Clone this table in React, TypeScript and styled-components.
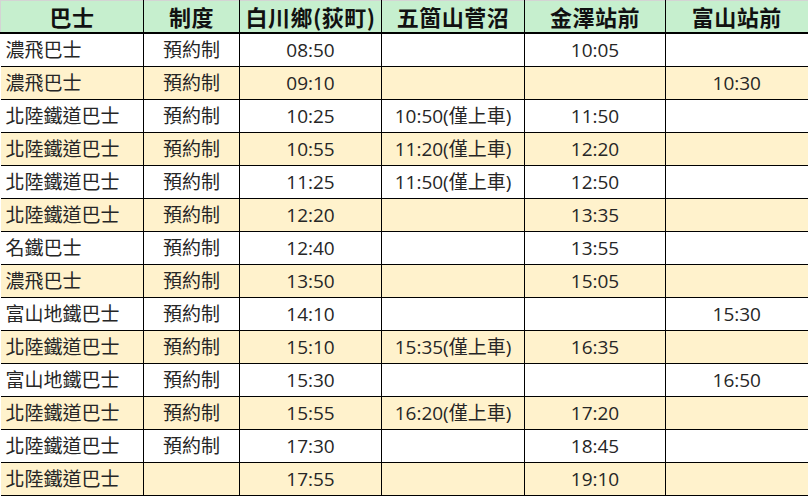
import styled, { createGlobalStyle } from "styled-components";

const GlobalStyle = createGlobalStyle`
  html, body {
    margin: 0;
    padding: 0;
    background: #ffffff;
  }
  body {
    font-family: "Open Sans", "Noto Sans CJK TC", sans-serif;
  }
`;

type Row = [string, string, string, string, string, string];

const rows: Row[] = [
  ["濃飛巴士", "預約制", "08:50", "", "10:05", ""],
  ["濃飛巴士", "預約制", "09:10", "", "", "10:30"],
  ["北陸鐵道巴士", "預約制", "10:25", "10:50(僅上車)", "11:50", ""],
  ["北陸鐵道巴士", "預約制", "10:55", "11:20(僅上車)", "12:20", ""],
  ["北陸鐵道巴士", "預約制", "11:25", "11:50(僅上車)", "12:50", ""],
  ["北陸鐵道巴士", "預約制", "12:20", "", "13:35", ""],
  ["名鐵巴士", "預約制", "12:40", "", "13:55", ""],
  ["濃飛巴士", "預約制", "13:50", "", "15:05", ""],
  ["富山地鐵巴士", "預約制", "14:10", "", "", "15:30"],
  ["北陸鐵道巴士", "預約制", "15:10", "15:35(僅上車)", "16:35", ""],
  ["富山地鐵巴士", "預約制", "15:30", "", "", "16:50"],
  ["北陸鐵道巴士", "預約制", "15:55", "16:20(僅上車)", "17:20", ""],
  ["北陸鐵道巴士", "預約制", "17:30", "", "18:45", ""],
  ["北陸鐵道巴士", "", "17:55", "", "19:10", ""],
];

const headers = ["巴士", "制度", "白川鄉(荻町)", "五箇山菅沼", "金澤站前", "富山站前"];
const widths = [143, 96, 142, 143, 141, 143];

const Table = styled.table`
  border-collapse: collapse;
  table-layout: fixed;
  width: 808px;
  font-family: "Open Sans", "Noto Sans CJK TC", sans-serif;
  color: #262626;
`;

const HeadCell = styled.th`
  height: 31px;
  padding: 0;
  background: #c6efce;
  border-top: 1px solid #d4d4d4;
  border-left: 1px solid #000;
  border-right: 2px solid #000;
  border-bottom: 2px solid #000;
  font-family: "Noto Sans CJK TC", sans-serif;
  font-size: 22px;
  font-weight: 700;
  line-height: 31px;
  letter-spacing: 0.5px;
  color: #111;
  text-align: center;
  white-space: nowrap;
  overflow: hidden;

  &:first-child {
    border-left: 1px solid #d4d4d4;
  }
  &:not(:last-child) {
    border-right-width: 1px;
  }
`;

const BodyRow = styled.tr<{ $alt: boolean; $last: boolean }>`
  background: ${(p) => (p.$alt ? "#fff2cc" : "#ffffff")};
  border-bottom: ${(p) => (p.$last ? "2px" : "1px")} solid #000;
`;

const Cell = styled.td<{ $left?: boolean }>`
  height: 32px;
  padding: ${(p) => (p.$left ? "0 0 0 5px" : "0")};
  border-left: 1px solid #000;
  border-right: 1px solid #000;
  font-size: 19px;
  line-height: 32px;
  text-align: ${(p) => (p.$left ? "left" : "center")};
  white-space: nowrap;
  overflow: hidden;

  &:first-child {
    border-left: none;
  }
  &:last-child {
    border-right-width: 2px;
  }
`;

export default function App() {
  return (
    <>
      <GlobalStyle />
      <Table>
        <colgroup>
          {widths.map((w, i) => (
            <col key={i} style={{ width: w }} />
          ))}
        </colgroup>
        <thead>
          <tr>
            {headers.map((h) => (
              <HeadCell key={h}>{h}</HeadCell>
            ))}
          </tr>
        </thead>
        <tbody>
          {rows.map((r, i) => (
            <BodyRow key={i} $alt={i % 2 === 1} $last={i === rows.length - 1}>
              {r.map((c, j) => (
                <Cell key={j} $left={j === 0}>
                  {c}
                </Cell>
              ))}
            </BodyRow>
          ))}
        </tbody>
      </Table>
    </>
  );
}
